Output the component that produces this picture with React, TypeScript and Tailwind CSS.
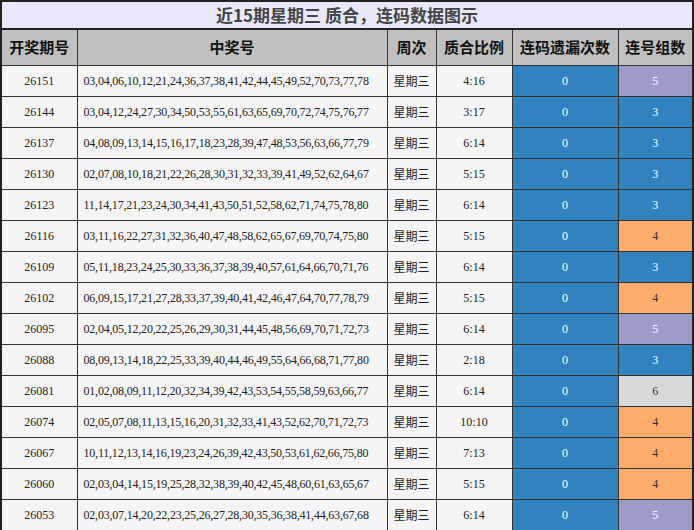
const rows: [string, string, string, number][] = [
["26151","03,04,06,10,12,21,24,36,37,38,41,42,44,45,49,52,70,73,77,78","4:16",5],
["26144","03,04,12,24,27,30,34,50,53,55,61,63,65,69,70,72,74,75,76,77","3:17",3],
["26137","04,08,09,13,14,15,16,17,18,23,28,39,47,48,53,56,63,66,77,79","6:14",3],
["26130","02,07,08,10,18,21,22,26,28,30,31,32,33,39,41,49,52,62,64,67","5:15",3],
["26123","11,14,17,21,23,24,30,34,41,43,50,51,52,58,62,71,74,75,78,80","6:14",3],
["26116","03,11,16,22,27,31,32,36,40,47,48,58,62,65,67,69,70,74,75,80","5:15",4],
["26109","05,11,18,23,24,25,30,33,36,37,38,39,40,57,61,64,66,70,71,76","6:14",3],
["26102","06,09,15,17,21,27,28,33,37,39,40,41,42,46,47,64,70,77,78,79","5:15",4],
["26095","02,04,05,12,20,22,25,26,29,30,31,44,45,48,56,69,70,71,72,73","6:14",5],
["26088","08,09,13,14,18,22,25,33,39,40,44,46,49,55,64,66,68,71,77,80","2:18",3],
["26081","01,02,08,09,11,12,20,32,34,39,42,43,53,54,55,58,59,63,66,77","6:14",6],
["26074","02,05,07,08,11,13,15,16,20,31,32,33,41,43,52,62,70,71,72,73","10:10",4],
["26067","10,11,12,13,14,16,19,23,24,26,39,42,43,50,53,61,62,66,75,80","7:13",4],
["26060","02,03,04,14,15,19,25,28,32,38,39,40,42,45,48,60,61,63,65,67","5:15",4],
["26053","02,03,07,14,20,22,23,25,26,27,28,30,35,36,38,41,44,63,67,68","6:14",5],
];
const cc: Record<number,string> = {3:"bg-[#3282c0] text-white",4:"bg-[#fcad6c] text-[#333]",5:"bg-[#9d9bc8] text-white",6:"bg-[#d9d9d9] text-[#333]"};
const cjk = { fontFamily: '"Noto Sans CJK SC", sans-serif' };
export default function App() {
  const td = "border border-[#333] h-[31px] text-center p-0";
  return (
    <div className="w-[694px] h-[530px] overflow-hidden bg-white" style={{fontFamily:'"Liberation Serif", "Noto Sans CJK SC", serif'}}>
      <table className="w-[694px] border-collapse border-2 border-[#222] text-[12px] text-[#222] table-fixed">
        <colgroup><col className="w-[76px]"/><col className="w-[310px]"/><col className="w-[49px]"/><col className="w-[76px]"/><col className="w-[106px]"/><col/></colgroup>
        <thead>
          <tr><th colSpan={6} className="border-2 border-[#222] h-[27px] bg-[#e8e8fa] text-[17px] font-bold text-[#444] p-0" style={cjk}>近15期星期三 质合，连码数据图示</th></tr>
          <tr className="bg-[#c0c0c0] text-[15px] font-bold text-[#111]" style={cjk}>
            {["开奖期号","中奖号","周次","质合比例","连码遗漏次数","连号组数"].map(h=><th key={h} className="border border-[#333] h-[37px] p-0">{h}</th>)}
          </tr>
        </thead>
        <tbody>
          {rows.map(r=>(
            <tr key={r[0]} className="bg-[#f5f5f5]">
              <td className={td}>{r[0]}</td>
              <td className={td+" text-left pl-[6px] tracking-[-0.2px]"}>{r[1]}</td>
              <td className={td} style={cjk}>星期三</td>
              <td className={td}>{r[2]}</td>
              <td className={td+" bg-[#3282c0] text-white"}>0</td>
              <td className={td+" "+cc[r[3]]}>{r[3]}</td>
            </tr>
          ))}
        </tbody>
      </table>
    </div>
  );
}
